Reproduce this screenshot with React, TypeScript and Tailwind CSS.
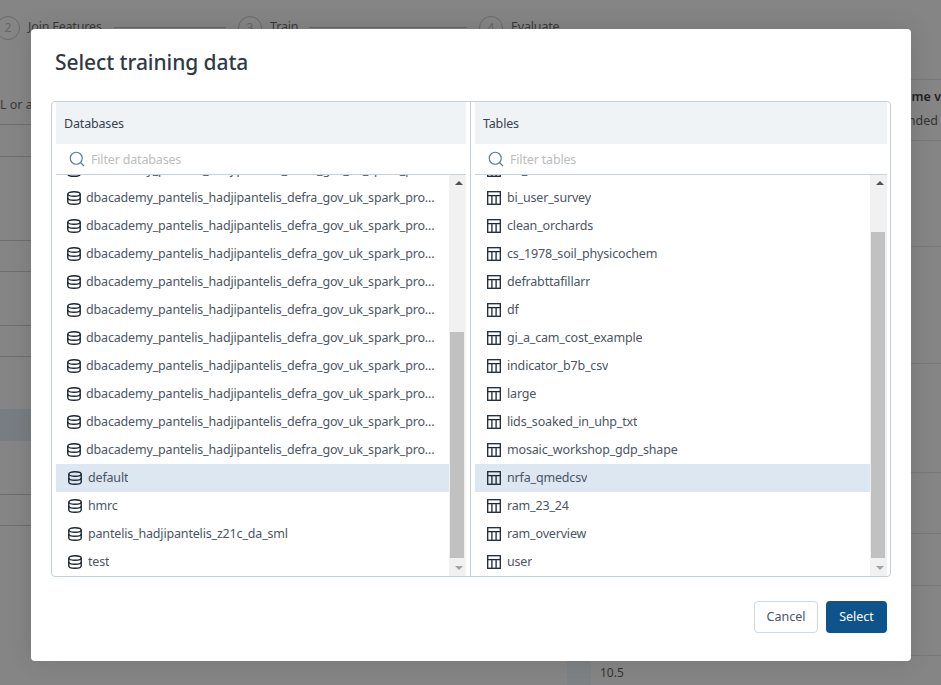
import React from "react";
import { Search } from "lucide-react";

const FONT = "[font-family:'Noto_Sans','Open_Sans',sans-serif]";

function DbIcon() {
  return (
    <svg width="14" height="14" viewBox="0 0 14 14" fill="none" stroke="#1c2733" strokeWidth="1.4" className="shrink-0">
      <ellipse cx="7" cy="3" rx="6.2" ry="2.3" />
      <path d="M0.8 3v8c0 1.3 2.8 2.3 6.2 2.3s6.2-1 6.2-2.3V3" />
      <path d="M0.8 7c0 1.3 2.8 2.3 6.2 2.3s6.2-1 6.2-2.3" />
    </svg>
  );
}

function TableIcon() {
  return (
    <svg width="14" height="14" viewBox="0 0 14 14" fill="none" stroke="#1c2733" strokeWidth="1.3" className="shrink-0">
      <rect x="0.7" y="0.7" width="12.6" height="12.6" />
      <path d="M0.7 4.6h12.6" />
      <path d="M4.9 4.6v8.7M9.1 4.6v8.7" />
    </svg>
  );
}

function Scrollbar({ thumbTop, thumbHeight }: { thumbTop: number; thumbHeight: number }) {
  return (
    <div className="relative w-[17px] shrink-0 bg-[#f1f1f1]">
      <div className="absolute left-[7px] top-[6px] h-0 w-0 -translate-x-[1px] border-x-[4px] border-b-[4px] border-x-transparent border-b-[#505050]" />
      <div className="absolute left-[1px] w-[14px] bg-[#c1c1c1]" style={{ top: thumbTop, height: thumbHeight }} />
      <div className="absolute bottom-[6px] left-[7px] h-0 w-0 -translate-x-[1px] border-x-[4px] border-t-[4px] border-x-transparent border-t-[#a3a3a3]" />
    </div>
  );
}

function Row({ label, icon, selected }: { label: string; icon: React.ReactNode; selected?: boolean }) {
  return (
    <div className={`flex h-[28px] shrink-0 items-center gap-[5px] pl-[11px] pr-[14px] text-[12.5px] tracking-[-0.17px] text-[#4b5563] ${selected ? "bg-[#dce7f2]" : ""}`}>
      <span className="flex w-[16px] justify-center">{icon}</span>
      <span className="truncate pt-[1px]">{label}</span>
    </div>
  );
}

function Panel({
  title,
  filter,
  rows,
  selected,
  icon,
  thumbTop,
  thumbHeight,
  className,
}: {
  title: string;
  filter: string;
  rows: string[];
  selected: string;
  icon: React.ReactNode;
  thumbTop: number;
  thumbHeight: number;
  className: string;
}) {
  return (
    <div className={`flex min-w-0 flex-col ${className}`}>
      <div className="flex h-[42px] shrink-0 items-center bg-[#f0f3f6] px-[8px] pt-[2px] text-[12.5px] tracking-[-0.17px] text-[#374151]">{title}</div>
      <div className="flex h-[31px] shrink-0 items-center gap-[5px] border-b border-[#c9d2d9] pl-[12px] text-[12.5px] tracking-[-0.17px] text-[#bdbdbd]">
        <Search size={18} strokeWidth={1.6} color="#5f7d95" />
        <span className="pt-[2px]">{filter}</span>
      </div>
      <div className="flex min-h-0 flex-1">
        <div className="min-w-0 flex-1 overflow-hidden">
          <div className="-mt-[19px] flex flex-col">
            {rows.map((r, i) => (
              <Row key={i} label={r} icon={icon} selected={r === selected} />
            ))}
          </div>
        </div>
        <Scrollbar thumbTop={thumbTop} thumbHeight={thumbHeight} />
      </div>
    </div>
  );
}

const long = "dbacademy_pantelis_hadjipantelis_defra_gov_uk_spark_programming";
const dbs = [...Array(11).fill(long), "default", "hmrc", "pantelis_hadjipantelis_z21c_da_sml", "test"];
const tables = [
  "bfi_wetlands",
  "bi_user_survey",
  "clean_orchards",
  "cs_1978_soil_physicochem",
  "defrabttafillarr",
  "df",
  "gi_a_cam_cost_example",
  "indicator_b7b_csv",
  "large",
  "lids_soaked_in_uhp_txt",
  "mosaic_workshop_gdp_shape",
  "nrfa_qmedcsv",
  "ram_23_24",
  "ram_overview",
  "user",
];

function Step({ n, label, className }: { n: string; label: string; className: string }) {
  return (
    <div className={`flex items-center gap-[8px] ${className}`}>
      <div className="flex h-[24px] w-[24px] shrink-0 items-center justify-center rounded-full border border-[#6a6a6a] text-[12px] text-[#666]">{n}</div>
      <span className="text-[12.5px] tracking-[-0.17px] text-[#3a3a3a]">{label}</span>
    </div>
  );
}

export default function App() {
  return (
    <div className={`relative h-[685px] w-[941px] overflow-hidden bg-[#858585] ${FONT}`}>
      {/* page behind the dialog */}
      <div className="flex h-[39px] items-center pt-[16px]">
        <Step n="2" label="Join Features" className="-ml-[4px] w-[242px]" />
        <Step n="3" label="Train" className="w-[241px]" />
        <Step n="4" label="Evaluate" className="" />
      </div>
      <div className="absolute left-[114px] top-[27px] h-px w-[112px] bg-[#666]" />
      <div className="absolute left-[309px] top-[27px] h-px w-[158px] bg-[#666]" />
      <div className="absolute left-0 top-[96px] text-[12.5px] text-[#3a3a3a]">L or a</div>
      <div className="absolute right-0 top-[88px] text-[12.5px] font-semibold text-[#222]">time v</div>
      <div className="absolute right-[3px] top-[112px] text-[12.5px] text-[#333]">nded</div>
      <div className="absolute left-[600px] top-[664px] text-[12px] text-[#333]">10.5</div>
      <div className="absolute left-[567px] top-[661px] h-[24px] w-[24px] bg-[#7e8284]" />
      <div className="absolute left-0 top-[409px] h-[32px] w-[31px] bg-[#777d82]" />
      {[124, 156, 240, 271, 325, 356, 494, 525].map((y) => (
        <div key={y} className="absolute left-0 h-px w-[31px] bg-[#6e6e6e]" style={{ top: y }} />
      ))}
      {[79, 140, 246, 363, 472, 533, 585, 655].map((y) => (
        <div key={y} className="absolute right-0 h-px w-[30px] bg-[#777]" style={{ top: y }} />
      ))}

      {/* dialog */}
      <div className="absolute left-[31px] top-[29px] flex h-[632px] w-[880px] flex-col rounded-[4px] bg-white pb-[44px] pl-[20px] pr-[20px] shadow-[0_0_24px_rgba(0,0,0,0.12)]">
        <div className="flex h-[72px] shrink-0 items-start pl-[4px] pt-[18px] text-[21px] font-medium leading-[30px] tracking-[-0.08px] text-[#2f3a45]">
          Select training data
        </div>
        <div className="flex h-[476px] shrink-0 rounded-[4px] border border-[#c4d0d8]">
          <Panel
            title="Databases"
            filter="Filter databases"
            rows={dbs}
            selected="default"
            icon={<DbIcon />}
            thumbTop={157}
            thumbHeight={226}
            className="ml-[4px] w-[410px]"
          />
          <div className="ml-[4px] w-px shrink-0 bg-[#c4d0d8]" />
          <Panel
            title="Tables"
            filter="Filter tables"
            rows={tables}
            selected="nrfa_qmedcsv"
            icon={<TableIcon />}
            thumbTop={57}
            thumbHeight={326}
            className="ml-[4px] w-[412px]"
          />
        </div>
        <div className="mt-[24px] flex justify-end gap-[8px] pr-[4px]">
          <div className="flex h-[32px] w-[64px] items-center justify-center rounded-[4px] border border-[#c9dbe6] bg-white pt-[1px] text-[12.5px] text-[#4b5563]">Cancel</div>
          <div className="flex h-[32px] w-[61px] items-center justify-center rounded-[4px] bg-[#0e538c] pt-[1px] text-[12.5px] text-white">Select</div>
        </div>
      </div>
    </div>
  );
}
